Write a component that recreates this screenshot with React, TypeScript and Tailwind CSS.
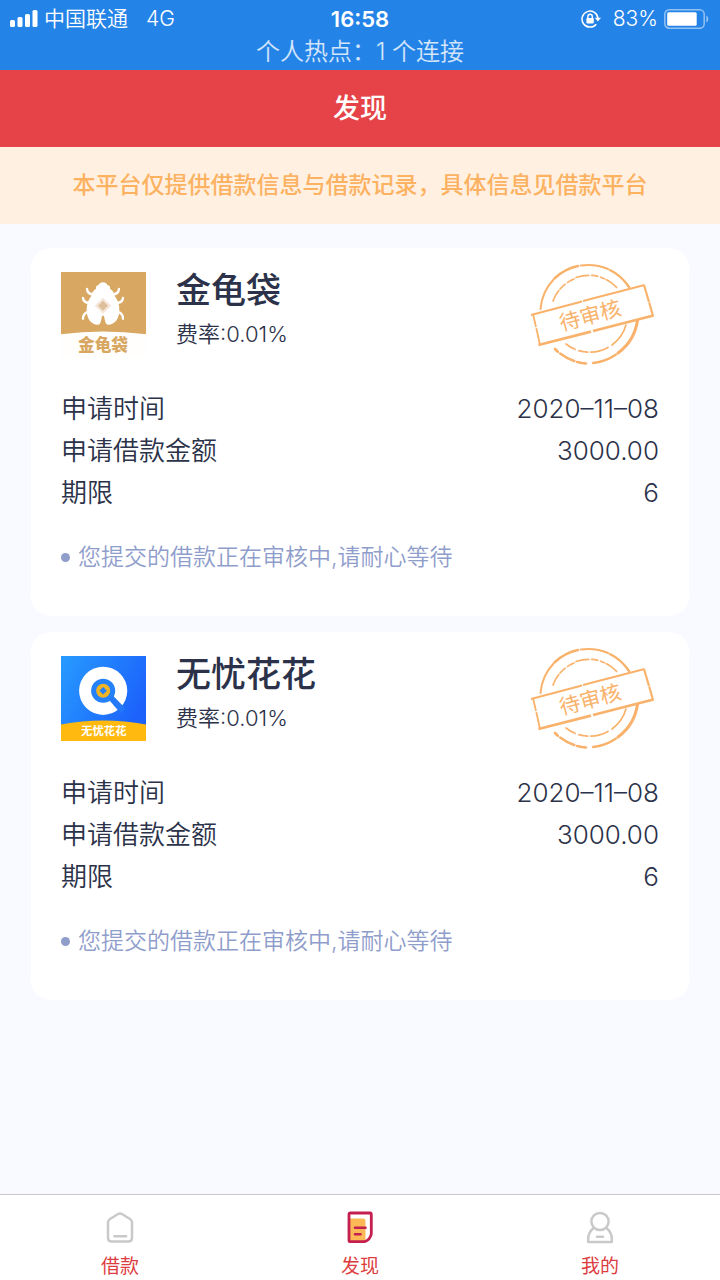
import React from 'react';

type Loan = {
  id: number;
  name: string;
  rate: string;
  date: string;
  amount: string;
  term: string;
  Logo: () => React.ReactElement;
};

function SignalIcon() {
  return (
    <svg width="28" height="18" viewBox="0 0 28 18" fill="#fff" aria-hidden="true">
      <rect x="0" y="10" width="5" height="7" rx="1.5" />
      <rect x="7.5" y="7" width="5" height="10" rx="1.5" />
      <rect x="15" y="4" width="5" height="13" rx="1.5" />
      <rect x="22.5" y="0" width="5" height="17" rx="1.5" />
    </svg>
  );
}

function RotationLockIcon() {
  return (
    <svg width="20" height="18" viewBox="0 0 20 18" fill="none" aria-hidden="true">
      <path d="M15.2 14.2A8 8 0 1 1 17 8.5" stroke="#fff" strokeWidth="1.5" />
      <path d="M13.8 7.8H20L16.9 11.6Z" fill="#fff" />
      <rect x="5.4" y="8" width="7.4" height="5.4" rx="0.8" fill="#fff" />
      <path d="M6.9 8V6.4a2.2 2.2 0 0 1 4.4 0V8" stroke="#fff" strokeWidth="1.4" />
    </svg>
  );
}

function BatteryIcon() {
  return (
    <svg width="46" height="20" viewBox="0 0 46 20" fill="none" aria-hidden="true">
      <rect x="0.8" y="0.8" width="39.4" height="18.4" rx="4.5" stroke="#fff" strokeOpacity="0.5" strokeWidth="1.5" />
      <rect x="3.2" y="3.2" width="29.5" height="13.6" rx="1.5" fill="#fff" />
      <path d="M42.3 6.5c2.6 1 2.6 6 0 7z" fill="#fff" fillOpacity="0.5" />
    </svg>
  );
}

function BeetleLogo() {
  return (
    <svg className="size-[85px] shrink-0" viewBox="32 30 255 255" role="img" aria-label="金龟袋">
      <rect x="32" y="30" width="255" height="255" fill="#fffefd" />
      <path d="M32 30H287V217Q158 200 32 217Z" fill="#d8a862" />
      <g fill="none" stroke="#fff" strokeWidth="7" strokeLinecap="round">
        <path d="M110 81Q112 98 131 97" />
        <path d="M206 81Q204 98 185 97" />
        <path d="M98 108Q100 124 120 122" />
        <path d="M218 108Q216 124 196 122" />
        <path d="M98 170Q98 153 116 149" />
        <path d="M218 170Q218 153 200 149" />
      </g>
      <path
        d="M158 61C164 61 169 64 171 69C178 70 180 74 179 80C188 85 192 93 193 102C203 115 208 130 207 147C206 170 194 188 174 188C168 188 166 184 164 176L161 163Q158 158 155 163L152 176C150 184 148 188 142 188C122 188 110 170 109 147C108 130 113 115 123 102C124 93 128 85 137 80C136 74 138 70 145 69C147 64 152 61 158 61Z"
        fill="#fff"
      />
      <path d="M158 107L183 131L158 155L133 131Z" fill="#f6e6da" />
      <path d="M158 116L173 131L158 146L143 131Z" fill="#ddc09b" />
      <text x="158" y="266" textAnchor="middle" fontSize="50" fontWeight="900" fill="#d8a862">
        金龟袋
      </text>
    </svg>
  );
}

function CoinLogo() {
  return (
    <svg className="size-[85px] shrink-0" viewBox="32 32 254 254" role="img" aria-label="无忧花花">
      <defs>
        <linearGradient id="coinBg" x1="0" y1="0" x2="1" y2="0.5">
          <stop offset="0" stopColor="#279bff" />
          <stop offset="1" stopColor="#1c62fb" />
        </linearGradient>
      </defs>
      <rect x="32" y="32" width="254" height="254" fill="url(#coinBg)" />
      <circle cx="158" cy="136" r="72" fill="#fff" />
      <circle cx="158" cy="136" r="36" fill="#2581f8" />
      <path d="M175 163L187 150L224 188L210 203Z" fill="#2379f8" />
      <circle cx="158" cy="136" r="21" fill="#efb527" />
      <path d="M158 125L169 136L158 147L147 136Z" fill="#2581f8" />
      <path d="M32 237Q158 212 286 237V286H32Z" fill="#ffb90f" />
      <text x="160" y="269" textAnchor="middle" fontSize="34" fontWeight="700" fill="#fff">
        无忧花花
      </text>
    </svg>
  );
}

function PendingStamp() {
  return (
    <svg className="h-[105px] w-[131px] shrink-0" viewBox="8 7 131 105" fill="none" stroke="#f9b26b">
      <g strokeWidth="2.6" strokeLinecap="round">
        <path d="M20.5 54A49 49 0 0 1 34 24" strokeWidth="2" />
        <path d="M35 23A49 49 0 0 1 58 11" />
        <path d="M61 10.5A49 49 0 0 1 88 14" strokeWidth="2" />
        <path d="M90 15A49 49 0 0 1 109 32" strokeWidth="2.4" />
        <path d="M117.5 65A49 49 0 0 1 98 98" strokeWidth="3" />
        <path d="M96 99.5A49 49 0 0 1 73 108" strokeWidth="2.4" />
        <path d="M66 108.5A49 49 0 0 1 35 94" strokeDasharray="9 3 16 3" />
      </g>
      <g strokeWidth="1.7" strokeLinecap="round">
        <path d="M33 46A38 38 0 0 1 54 24" strokeDasharray="12 2 7 3" />
        <path d="M56 22.5A38 38 0 0 1 98 34" strokeDasharray="13 3 6 3 4 2" />
        <path d="M106 70A38 38 0 0 1 92 90" />
        <path d="M88 92.5A38 38 0 0 1 46 89" strokeDasharray="18 3 9 4" />
      </g>
      <path d="M12.5 60L124 31L133 61L19.5 89.5Z" fill="#fff" stroke="none" />
      <g strokeWidth="2.2">
        <path d="M11 60L62 46.5M63 46L124.5 30" />
        <path d="M124 30L129 47M129.2 47.5L133 61" />
        <path d="M133.5 60.5L73 76M71 76.6L18.5 90" strokeWidth="2.8" />
        <path d="M13 59L16 72M16.3 73L20 90" strokeWidth="1.8" />
      </g>
      <text
        x="70"
        y="68"
        textAnchor="middle"
        fontSize="21"
        fill="#f9b26b"
        stroke="none"
        transform="rotate(-15 70 60)"
      >
        待审核
      </text>
    </svg>
  );
}

function HomeIcon() {
  return (
    <svg width="32" height="34" viewBox="0 0 32 34" fill="none" stroke="#c9c9c9" strokeWidth="2.5" strokeLinejoin="round" strokeLinecap="round" aria-hidden="true">
      <path d="M14.5 3.8Q16 3 17.5 3.8L26 9Q28 10.2 28 12.5V28Q28 31.5 24.5 31.5H7.5Q4 31.5 4 28V12.5Q4 10.2 6 9Z" />
      <path d="M10.5 26.3H22" />
    </svg>
  );
}

function DiscoverIcon() {
  return (
    <svg width="32" height="34" viewBox="0 0 32 34" fill="none" aria-hidden="true">
      <path d="M6 8.5H19.5Q21.5 8.5 21.5 11V31H6Z" fill="#fcb955" />
      <path d="M6.5 3H26Q27.3 3 27.3 4.5V24Q26 30 20.5 31.7H6.5Q5 31.7 5 30.2V4.5Q5 3 6.5 3Z" stroke="#c41f4f" strokeWidth="2.8" strokeLinejoin="round" />
      <path d="M11 17.8H21.5M11 24.2H16.5" stroke="#c41f4f" strokeWidth="2.6" strokeLinecap="round" />
    </svg>
  );
}

function MineIcon() {
  return (
    <svg width="32" height="34" viewBox="0 0 32 34" fill="none" stroke="#c9c9c9" strokeWidth="2.5" strokeLinejoin="round" strokeLinecap="round" aria-hidden="true">
      <circle cx="16" cy="11.5" r="8.6" />
      <path d="M9.5 18C6 21 4.2 25 4.2 29V32H27.8V29C27.8 25 26 21 22.5 18" />
      <path d="M13 26.7H19" />
    </svg>
  );
}

const loans: Loan[] = [
  { id: 1, name: '金龟袋', rate: '0.01%', date: '2020–11–08', amount: '3000.00', term: '6', Logo: BeetleLogo },
  { id: 2, name: '无忧花花', rate: '0.01%', date: '2020–11–08', amount: '3000.00', term: '6', Logo: CoinLogo },
];

const tabs = [
  { label: '借款', href: '#loan', Icon: HomeIcon },
  { label: '发现', href: '#discover', Icon: DiscoverIcon },
  { label: '我的', href: '#mine', Icon: MineIcon },
];

function LoanCard({ loan }: { loan: Loan }) {
  const rows = [
    { label: '申请时间', value: loan.date },
    { label: '申请借款金额', value: loan.amount },
    { label: '期限', value: loan.term },
  ];

  return (
    <article className="rounded-[20px] bg-white px-[30px] pt-[14px] pb-[39px]">
      <div className="flex items-center">
        <loan.Logo />
        <div className="ml-[30px] flex-1 pb-[5px]">
          <h2 className="text-[35px] leading-[44px] font-medium">{loan.name}</h2>
          <p className="text-[22px] leading-[44px] font-[350]">费率:{loan.rate}</p>
        </div>
        <PendingStamp />
      </div>

      <dl className="mt-[21px] text-[26px] leading-[42px] font-[350]">
        {rows.map((row) => (
          <div key={row.label} className="flex justify-between">
            <dt>{row.label}</dt>
            <dd>{row.value}</dd>
          </div>
        ))}
      </dl>

      <p className="mt-[23px] flex items-center gap-2 text-[23px] leading-[40px] font-[350] text-[#8f9dcb]">
        <span className="size-[9px] rounded-full bg-[#8f9dcb]" />
        您提交的借款正在审核中,请耐心等待
      </p>
    </article>
  );
}

export default function App() {
  return (
    <div className="flex min-h-screen flex-col bg-[#f8faff] font-[Inter,'Noto_Sans_CJK_SC',sans-serif] text-[#2b3249]">
      <div className="bg-[#2483e7] text-white">
        <div className="grid grid-cols-3 items-center px-[10px] pt-1 text-[21px] leading-[30px]">
          <div className="flex items-center gap-[6px]">
            <SignalIcon />
            <span className="font-[350]">中国联通</span>
            <span className="ml-3 font-[350]">4G</span>
          </div>
          <span className="text-center text-[22px] font-semibold">16:58</span>
          <div className="flex items-center justify-end">
            <RotationLockIcon />
            <span className="mr-[6px] ml-3 font-[350]">83%</span>
            <BatteryIcon />
          </div>
        </div>
        <p className="text-center text-[24px] leading-[36px] font-[350] text-white/80">个人热点：1 个连接</p>
      </div>

      <header className="bg-[#e64348] text-center text-white">
        <h1 className="text-[27px] leading-[77px] font-medium">发现</h1>
      </header>

      <p className="bg-[#fff0e2] text-center text-[23px] leading-[77px] font-medium text-[#fcb261]">
        本平台仅提供借款信息与借款记录，具体信息见借款平台
      </p>

      <main className="flex flex-col gap-4 px-[31px] py-6">
        {loans.map((loan) => (
          <LoanCard key={loan.id} loan={loan} />
        ))}
      </main>

      <nav className="mt-auto grid grid-cols-3 border-t border-[#c8cad0] bg-white pt-[15px] pb-px">
        {tabs.map(({ label, href, Icon }) => (
          <a key={label} href={href} className="flex flex-col items-center gap-[11px] text-[19px] leading-6 text-[#dd3d40]">
            <Icon />
            {label}
          </a>
        ))}
      </nav>
    </div>
  );
}
